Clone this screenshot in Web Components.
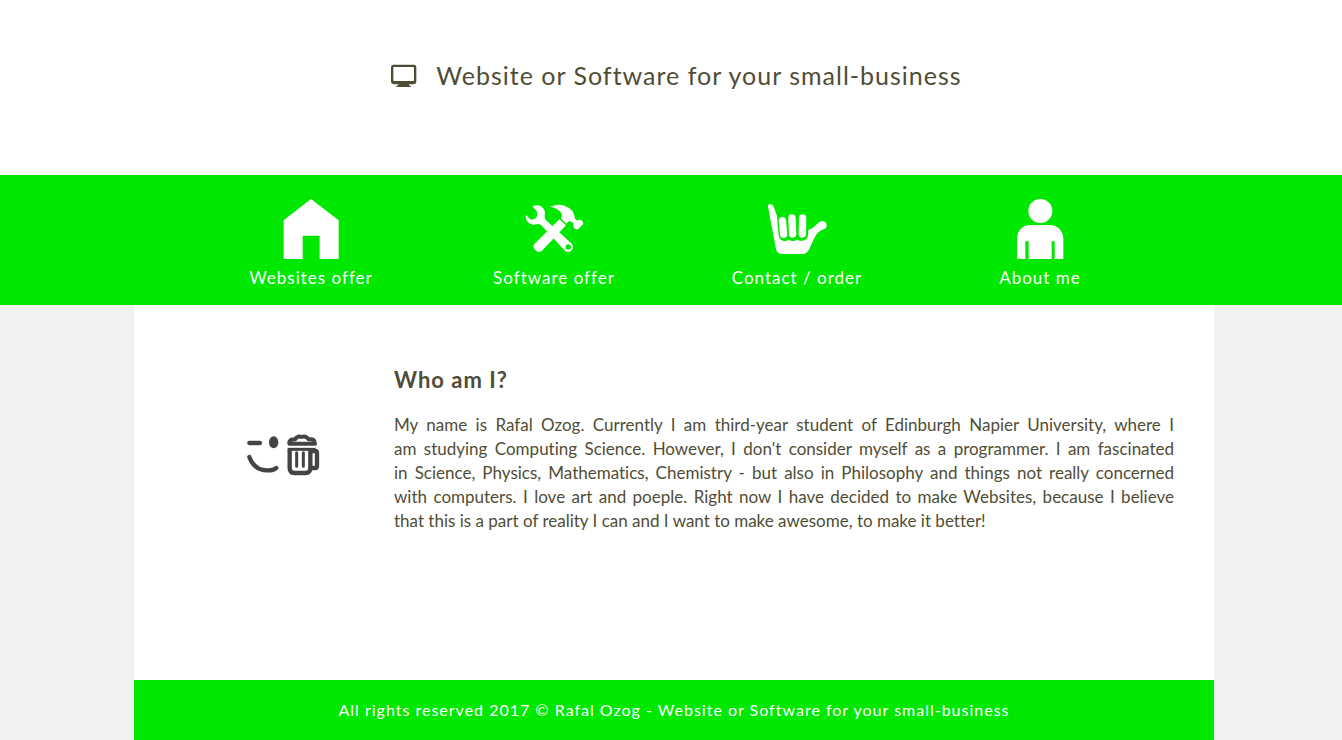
<!DOCTYPE html>
<html lang="en">
<head>
<meta charset="utf-8">
<title>Website or Software for your small-business</title>
<style>
body { margin: 0; min-height: 100vh; background: #f1f1f1; color: #504d36; font-family: Lato, "Open Sans", sans-serif; font-size: 17px; font-variant-ligatures: none; }
</style>
</head>
<body>
<oz-page>
  <oz-header slot="header">Website or Software for your small-business</oz-header>
  <oz-nav slot="nav">
    <oz-nav-item href="#websites" label="Websites offer">
      <svg viewBox="123 27 180 180" aria-hidden="true"><path d="M131 91L213 27L296 91V207H239V137H188V207H131Z"/></svg>
    </oz-nav-item>
    <oz-nav-item href="#software" label="Software offer">
      <svg viewBox="132 27 180 180" aria-hidden="true">
        <path fill-rule="evenodd" d="M157 49Q172 42 185 50Q198 60 194 78Q193 84 197 89L275 161Q282 171 276 180Q267 190 255 182L183 105Q177 101 169 103Q151 107 142 94Q135 86 138 75L151 88Q164 91 171 79Q174 67 167 60ZM265 163A8 8 0 1 0 265 179A8 8 0 1 0 265 163Z"/>
        <path d="M238 88L258 106L188 180Q180 190 170 184L163 177Q157 170 163 162Z"/>
        <path d="M211 50Q239 38 262 51Q281 61 283 78Q284 87 291 92Q298 87 304 91Q313 98 308 104L295 117Q287 121 282 114Q279 107 281 101Q274 93 266 94L259 101L242 85Q249 77 244 69Q235 55 211 50Z"/>
      </svg>
    </oz-nav-item>
    <oz-nav-item href="#contact" label="Contact / order">
      <svg viewBox="126 27 180 180" aria-hidden="true">
        <path fill-rule="evenodd" d="M129 50Q128 43 135 42Q142 42 145 48L156 77Q158 110 161 137Q164 150 177 153Q186 154 191 149Q204 157 217 149Q233 157 244 147Q250 142 250 120Q266 114 277 101Q286 92 297 94Q307 98 305 109Q303 117 290 120Q277 125 267 146L253 176Q247 191 233 192H169Q157 192 153 178Z"/>
        <g fill="none" stroke="#fff" stroke-linecap="round" stroke-width="22"><path d="M172 92L176 133"/><path d="M201 84L203 132"/><path d="M233 84L232 132"/></g>
      </svg>
    </oz-nav-item>
    <oz-nav-item href="#about" label="About me">
      <svg viewBox="121 27 180 180" aria-hidden="true"><circle cx="212" cy="63" r="36"/><path d="M142 207V146Q144 107 183 105H239Q278 107 281 146V207H255V154H246V207H177V154H167V207Z"/></svg>
    </oz-nav-item>
  </oz-nav>
  <oz-about heading="Who am I?">
    <span>My name is Rafal Ozog. Currently I am third-year student of Edinburgh Napier University, where I</span>
    <span>am studying Computing Science. However, I don't consider myself as a programmer. I am fascinated</span>
    <span>in Science, Physics, Mathematics, Chemistry - but also in Philosophy and things not really concerned</span>
    <span>with computers. I love art and poeple. Right now I have decided to make Websites, because I believe</span>
    <span>that this is a part of reality I can and I want to make awesome, to make it better!</span>
  </oz-about>
  <oz-footer slot="footer">All rights reserved 2017 © Rafal Ozog - Website or Software for your small-business</oz-footer>
</oz-page>

<script>
function define(name, html, setup) {
  const template = document.createElement('template');
  template.innerHTML = html;
  customElements.define(name, class extends HTMLElement {
    constructor() {
      super();
      this.attachShadow({ mode: 'open' }).append(template.content.cloneNode(true));
    }
    connectedCallback() { if (setup) setup(this, this.shadowRoot); }
  });
}

define('oz-page', `
<style>
:host { display: flex; flex-direction: column; min-height: 100vh; }
.column { flex: 1; display: flex; flex-direction: column; padding-left: 6px; }
.sheet { flex: 1; display: flex; flex-direction: column; width: 100%; max-width: 1080px; margin: 0 auto; background: #fff; }
main { flex: 1; }
</style>
<slot name="header"></slot>
<slot name="nav"></slot>
<div class="column"><div class="sheet"><main><slot></slot></main><slot name="footer"></slot></div></div>`);

define('oz-header', `
<style>
:host { display: block; background: #fff; }
header { display: flex; justify-content: center; align-items: center; gap: 18px; padding: 59px 20px 82px 30px; }
h1 { margin: 0; padding-bottom: 2px; font-size: 25px; font-weight: 400; line-height: 32px; letter-spacing: 1px; }
svg { width: 28px; height: 24px; flex: none; fill: currentColor; }
</style>
<header>
<svg viewBox="30 42 84 72" aria-hidden="true"><path fill-rule="evenodd" d="M40 44H102Q109 44 109 51V95Q109 102 101 103H87V106Q93 107 93 111H48Q48 107 55 106V103H41Q33 102 33 95V51Q33 44 40 44ZM42 51Q40 51 40 53V91Q40 93 42 93H100Q102 93 102 91V53Q102 51 100 51Z"/></svg>
<h1><slot></slot></h1>
</header>`);

define('oz-nav', `
<style>
:host { display: block; background: #00e800; color: #fff; }
nav { padding-left: 8px; }
.items { display: grid; grid-template-columns: repeat(4, 1fr); max-width: 972px; margin: 0 auto; padding: 24px 0 15px; }
</style>
<nav aria-label="Main"><div class="items"><slot></slot></div></nav>`);

define('oz-nav-item', `
<style>
:host { display: block; }
a { display: flex; flex-direction: column; align-items: center; gap: 7px; color: inherit; text-decoration: none; letter-spacing: 1px; line-height: 24px; }
span { padding-left: 1px; }
::slotted(svg) { width: 60px; height: 60px; fill: #fff; }
</style>
<a><slot></slot><span></span></a>`, (el, root) => {
  root.querySelector('a').setAttribute('href', el.getAttribute('href'));
  root.querySelector('span').textContent = el.getAttribute('label');
});

define('oz-about', `
<style>
:host { display: block; }
section { display: grid; grid-template-columns: 220px 1fr; align-items: center; padding: 60px 40px; }
.mood { justify-self: center; width: 74px; height: 42px; margin-top: 12px; color: #444; }
h2 { margin: 0 0 18px; font-size: 22px; line-height: 30px; letter-spacing: 1px; }
p { margin: 0; line-height: 24px; text-align: justify; }
::slotted(span) { display: block; text-align-last: justify; }
::slotted(span:last-child) { text-align-last: start; }
</style>
<section>
<svg class="mood" viewBox="35 42 222 126" fill="none" stroke="currentColor" stroke-linecap="round" stroke-linejoin="round" aria-hidden="true">
<path stroke-width="13" d="M42 69H74M42 111Q57 151 95 151Q113 152 123 144"/>
<ellipse cx="115" cy="67" rx="14" ry="18" fill="currentColor" stroke="none"/>
<path stroke-width="12" d="M162 71Q160 57 179 58Q187 46 199 51Q211 46 220 58Q239 55 239 71Z"/>
<path stroke-width="9" stroke-linecap="butt" d="M157 88H241"/>
<path stroke-width="13" d="M163 91V145Q164 159 177 159H210Q225 159 225 145V91M225 93H239Q245 93 245 99V137Q245 144 239 144H225"/>
<path stroke-width="9" d="M184 98V139M204 98V139"/>
</svg>
<article><h2></h2><p><slot></slot></p></article>
</section>`, (el, root) => {
  root.querySelector('h2').textContent = el.getAttribute('heading');
});

define('oz-footer', `
<style>
:host { display: block; background: #00e800; color: #fff; }
footer { padding: 18px 20px; font-size: 16px; line-height: 24px; letter-spacing: 1px; text-align: center; }
</style>
<footer><slot></slot></footer>`);
</script>
</body>
</html>
